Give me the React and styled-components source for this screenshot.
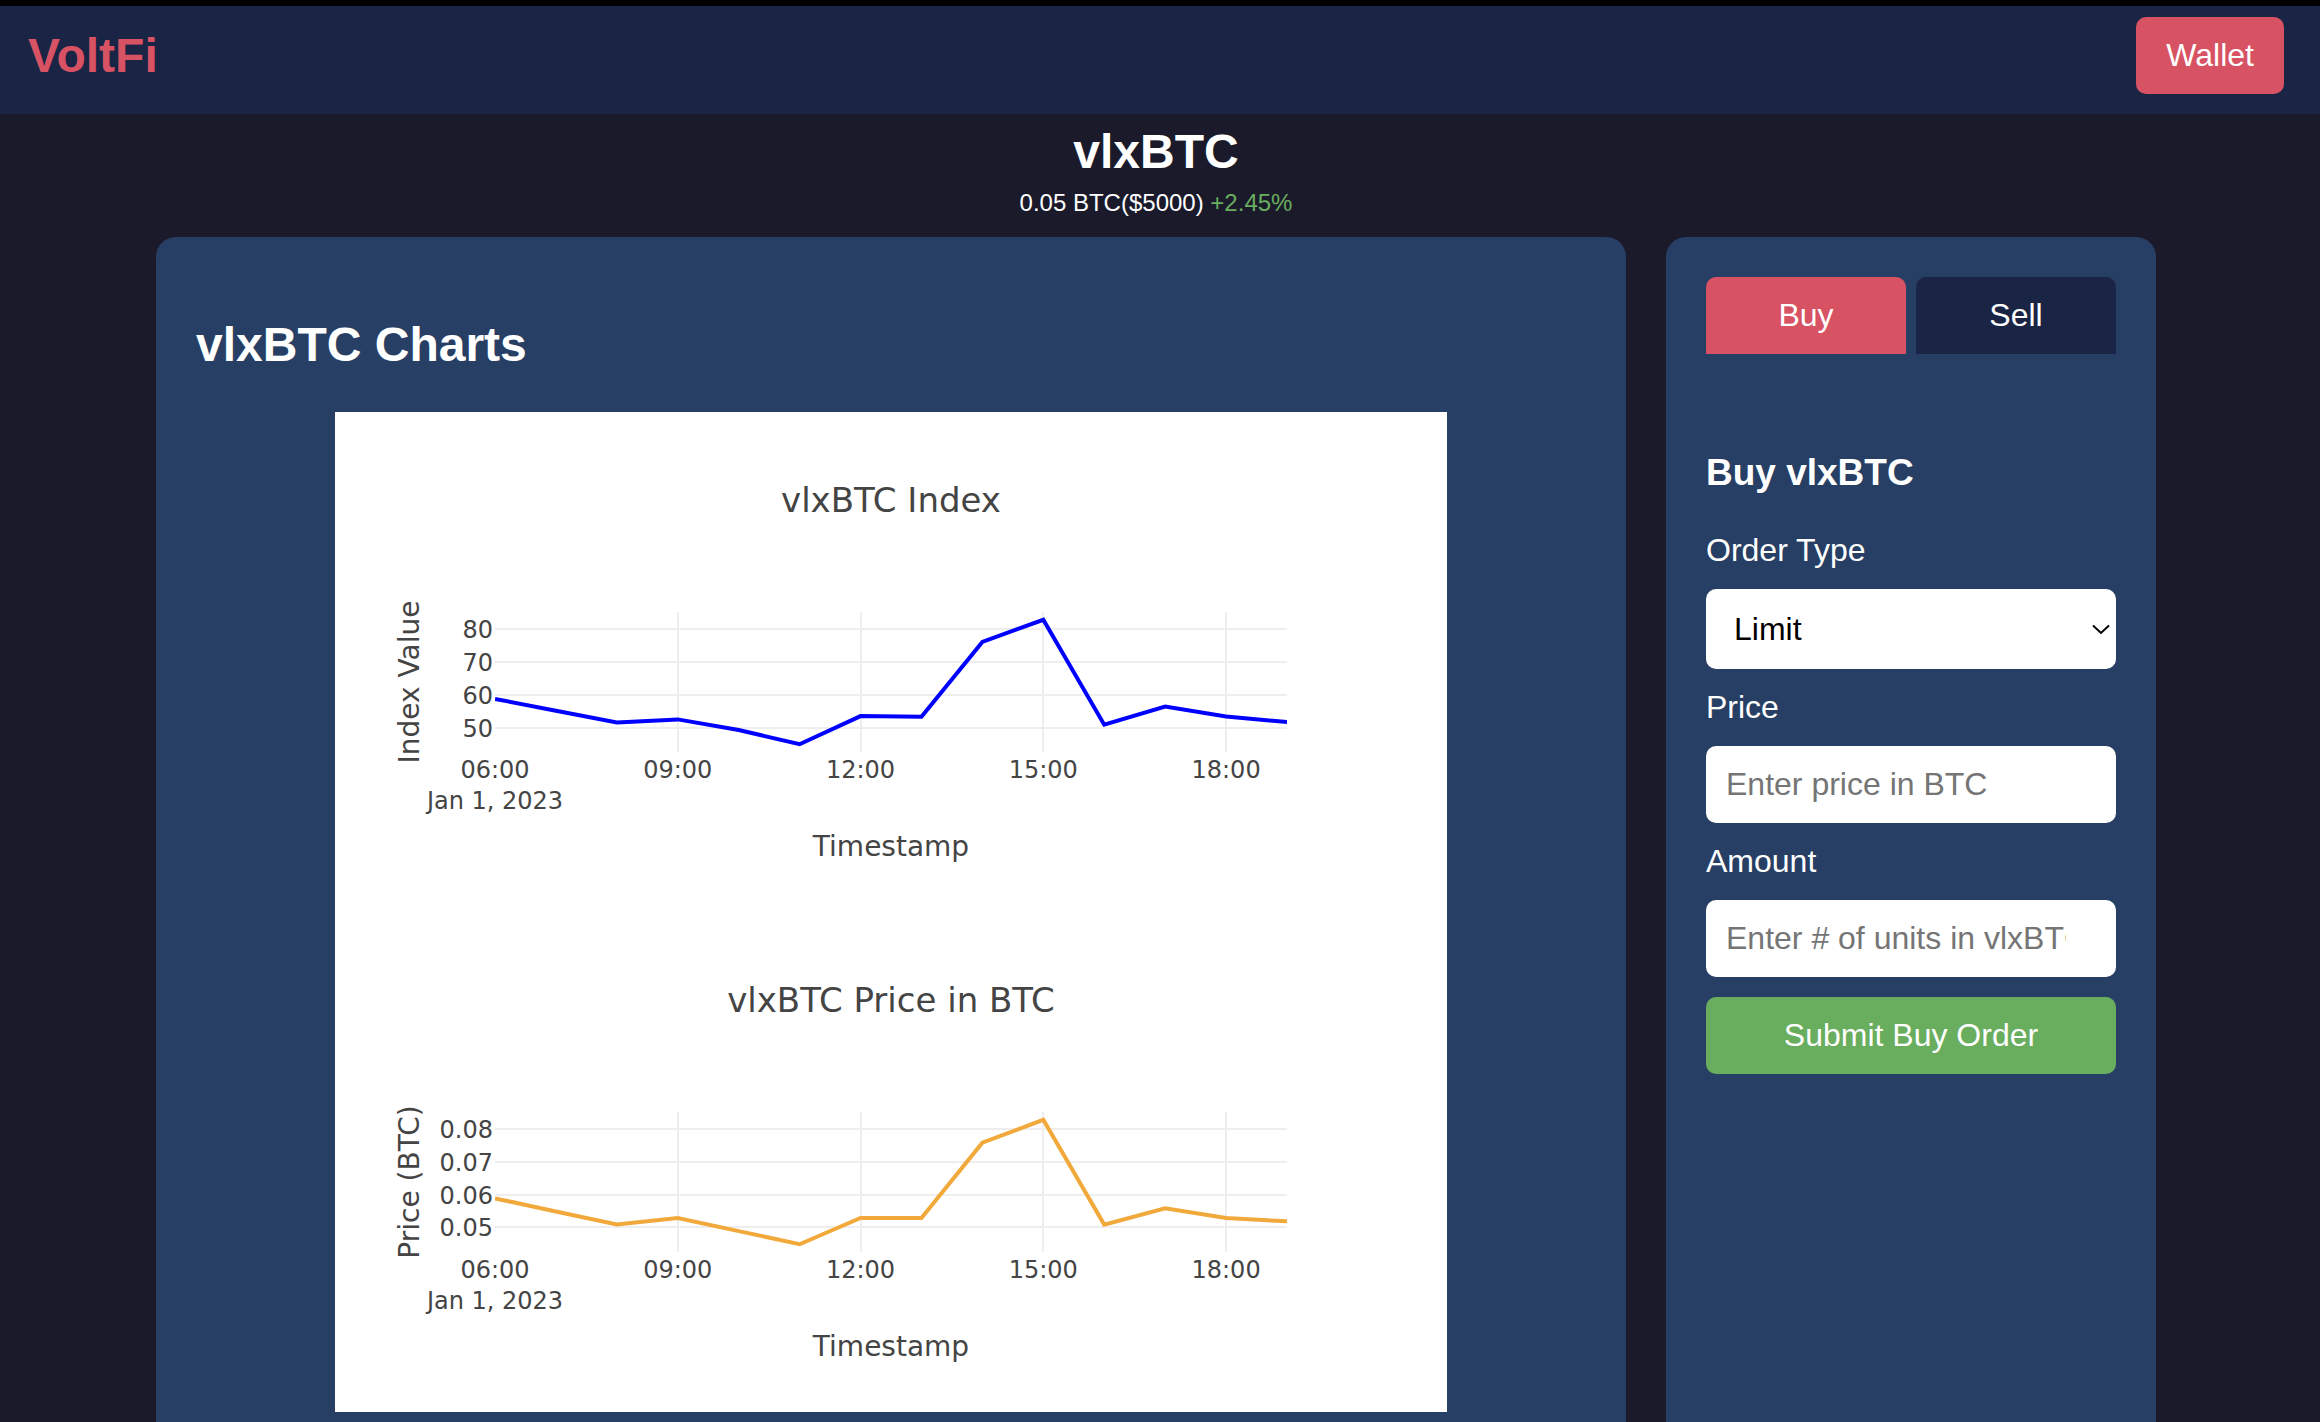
import React, { useState } from "react";
import styled, { createGlobalStyle } from "styled-components";

const GlobalStyle = createGlobalStyle`
  html {
    background-color: #1a1a2b;
    scrollbar-width: none;
  }

  body {
    margin: 0;
    color: white;
    font-family: Arial, "Liberation Sans", sans-serif;
    font-size: 32px;
  }

  button, input, select {
    font: inherit;
  }
`;

const Page = styled.div`
  border-top: 6px solid black;
`;

const Navbar = styled.nav`
  display: flex;
  justify-content: space-between;
  align-items: center;
  padding: 11px 36px 20px 28px;
  background-color: #1a2444;
`;

const Logo = styled.a`
  color: #d75263;
  font-size: 48px;
  font-weight: bold;
  text-decoration: none;
`;

const WalletButton = styled.button`
  padding: 20px 30px;
  border: none;
  border-radius: 10px;
  background-color: #d75263;
  color: white;
  cursor: pointer;
`;

const Main = styled.main`
  max-width: 2000px;
  margin: 0 auto;
  padding: 10px 8px 20px 0;
`;

const TokenInfo = styled.header`
  display: flex;
  flex-direction: column;
  gap: 10px;
  margin-bottom: 20px;
  text-align: center;
`;

const TokenName = styled.h1`
  margin: 0;
  font-size: 48px;
`;

const TokenPrice = styled.p`
  margin: 0;
  font-size: 24px;
`;

const Change = styled.span`
  color: #69ad5e;
`;

const Columns = styled.div`
  display: grid;
  grid-template-columns: 3fr 1fr;
  gap: 40px;
`;

const Card = styled.section`
  min-width: 0;
  padding: 40px;
  border-radius: 20px;
  background-color: #273f64;
`;

const CardTitle = styled.h2`
  margin: 40px 0;
  font-size: 48px;
`;

const Charts = styled.div`
  width: 80%;
  margin: 0 auto;
  background-color: white;
`;

const ChartSvg = styled.svg`
  display: block;
  width: 100%;
  font-family: Verdana, "DejaVu Sans", sans-serif;
  font-size: 24px;
  fill: #444;
`;

const ChartTitle = styled.text`
  font-size: 34px;
`;

const AxisTitle = styled.text`
  font-size: 28px;
`;

const Tabs = styled.div`
  display: flex;
  gap: 10px;
  margin-bottom: 60px;
`;

const Tab = styled.button`
  flex: 1;
  padding: 20px;
  border: none;
  border-radius: 10px 10px 0 0;
  background-color: ${props => (props.$active ? "#d75263" : "#1a2444")};
  color: white;
  cursor: pointer;
`;

const OrderForm = styled.form`
  display: flex;
  flex-direction: column;
  gap: 20px;
`;

const FormTitle = styled.h3`
  margin: 38px 0 18px;
  font-size: 37px;
`;

const Input = styled.input`
  box-sizing: border-box;
  width: 100%;
  padding: 20px ${props => (props.$wideEnd ? "50px" : "20px")} 20px 20px;
  border: none;
  border-radius: 10px;
  background-color: white;
  color: black;

  &::placeholder {
    color: #757575;
  }
`;

const SelectBox = styled.div`
  position: relative;
`;

const Select = styled.select`
  display: block;
  width: 100%;
  height: 80px;
  padding: 0 40px 0 28px;
  appearance: none;
  border: none;
  border-radius: 10px;
  background-color: white;
  color: black;
`;

const Chevron = styled.svg`
  position: absolute;
  top: 35px;
  right: 6px;
  width: 18px;
  height: 12px;
  pointer-events: none;
`;

const SubmitButton = styled.button`
  padding: 20px;
  border: none;
  border-radius: 10px;
  background-color: #69ad5e;
  color: white;
  cursor: pointer;
`;

const indexValues = [59.1, 55.5, 52, 52.9, 49.7, 45.4, 53.9, 53.7, 76.3, 83, 51.3, 56.8, 53.8, 52.1];
const priceValues = [0.059, 0.055, 0.051, 0.053, 0.049, 0.045, 0.053, 0.053, 0.076, 0.083, 0.051, 0.056, 0.053, 0.052];
const hours = ["06:00", "09:00", "12:00", "15:00", "18:00"];

// plot area inside the 1112x500 chart
const plot = { left: 160, top: 200, width: 792, height: 140 };

function LineChart({ title, yTitle, values, ticks, color }) {
  const min = Math.min(...values);
  const max = Math.max(...values);
  const pad = (max - min) / 16;
  const bottom = plot.top + plot.height;
  const right = plot.left + plot.width;
  const centerX = plot.left + plot.width / 2;
  const centerY = plot.top + plot.height / 2;

  const x = hour => plot.left + (hour * plot.width) / (values.length - 1);
  const y = value =>
    bottom - ((value - min + pad) / (max - min + pad * 2)) * plot.height;
  const gridX = hour => Math.round(x(hour));
  const gridY = value => Math.floor(y(value));

  const points = values.map((value, i) => `${x(i)},${y(value)}`).join(" ");

  return (
    <ChartSvg viewBox="0 0 1112 500" role="img" aria-label={title}>
      <ChartTitle x={centerX} y="100" textAnchor="middle">{title}</ChartTitle>
      <g stroke="#eee" strokeWidth="2">
        {hours.slice(1).map((hour, i) => (
          <line key={hour} x1={gridX(i * 3 + 3)} x2={gridX(i * 3 + 3)} y1={plot.top} y2={bottom} />
        ))}
        {ticks.map(tick => (
          <line key={tick} x1={plot.left} x2={right} y1={gridY(tick)} y2={gridY(tick)} />
        ))}
      </g>
      <svg x={plot.left} y={plot.top} width={plot.width} height={plot.height} viewBox={`${plot.left} ${plot.top} ${plot.width} ${plot.height}`}>
        <polyline points={points} fill="none" stroke={color} strokeWidth="4" />
      </svg>
      {ticks.map(tick => (
        <text key={tick} x={plot.left - 2} y={gridY(tick) + 9} textAnchor="end">{tick}</text>
      ))}
      {hours.map((hour, i) => (
        <text key={hour} x={x(i * 3)} y="366" textAnchor="middle">{hour}</text>
      ))}
      <text x={plot.left} y="397" textAnchor="middle">Jan 1, 2023</text>
      <AxisTitle x={centerX} y="444" textAnchor="middle">Timestamp</AxisTitle>
      <AxisTitle transform={`translate(84 ${centerY}) rotate(-90)`} textAnchor="middle">{yTitle}</AxisTitle>
    </ChartSvg>
  );
}

export default function App() {
  const [side, setSide] = useState("Buy");
  const [orderType, setOrderType] = useState("Limit");

  return (
    <Page>
      <GlobalStyle />
      <Navbar>
        <Logo href="#">VoltFi</Logo>
        <WalletButton type="button">Wallet</WalletButton>
      </Navbar>
      <Main>
        <TokenInfo>
          <TokenName>vlxBTC</TokenName>
          <TokenPrice>
            0.05 BTC($5000) <Change>+2.45%</Change>
          </TokenPrice>
        </TokenInfo>
        <Columns>
          <Card>
            <CardTitle>vlxBTC Charts</CardTitle>
            <Charts>
              <LineChart
                title="vlxBTC Index"
                yTitle="Index Value"
                values={indexValues}
                ticks={[80, 70, 60, 50]}
                color="#0000ff"
              />
              <LineChart
                title="vlxBTC Price in BTC"
                yTitle="Price (BTC)"
                values={priceValues}
                ticks={[0.08, 0.07, 0.06, 0.05]}
                color="#f2a93b"
              />
            </Charts>
          </Card>
          <Card>
            <Tabs>
              <Tab type="button" $active={side === "Buy"} onClick={() => setSide("Buy")}>Buy</Tab>
              <Tab type="button" $active={side === "Sell"} onClick={() => setSide("Sell")}>Sell</Tab>
            </Tabs>
            <OrderForm onSubmit={event => event.preventDefault()}>
              <FormTitle>{side} vlxBTC</FormTitle>
              <label htmlFor="order-type">Order Type</label>
              <SelectBox>
                <Select
                  id="order-type"
                  value={orderType}
                  onChange={event => setOrderType(event.target.value)}
                >
                  <option>Limit</option>
                  <option>Market</option>
                </Select>
                <Chevron viewBox="0 0 18 12" fill="none" stroke="black" strokeWidth="2">
                  <path d="M1 1.5 L9 9 L17 1.5" />
                </Chevron>
              </SelectBox>
              <label htmlFor="price">Price</label>
              <Input id="price" type="text" inputMode="decimal" placeholder="Enter price in BTC" />
              <label htmlFor="amount">Amount</label>
              <Input id="amount" type="text" inputMode="decimal" placeholder="Enter # of units in vlxBTC" $wideEnd />
              <SubmitButton type="submit">Submit {side} Order</SubmitButton>
            </OrderForm>
          </Card>
        </Columns>
      </Main>
    </Page>
  );
}
